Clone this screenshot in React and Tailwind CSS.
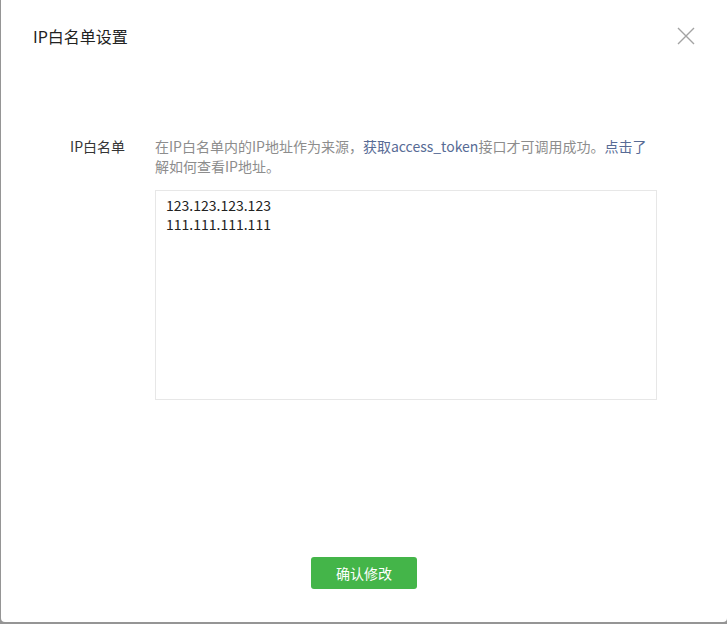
import React from 'react';

const font = { fontFamily: '"Noto Sans CJK SC", "Noto Sans", sans-serif' };

const CloseIcon = () => (
    <svg width="18" height="18" viewBox="0 0 18 18" className="block">
        <path d="M1 1 L17 17 M17 1 L1 17" stroke="#a3a3a3" strokeWidth="1.4" fill="none" />
    </svg>
);

const App = () => {
    return (
        <div className="w-[727px] h-[624px] bg-[#959595] pl-[1px] pb-[2px]" style={font}>
            <div className="h-full bg-white rounded-b-[4px] flex flex-col">
                {/* Header */}
                <div className="h-[72px] flex items-center justify-between pl-[32px] pr-[32px]">
                    <h2 className="text-[16px] text-[#222] leading-none">IP白名单设置</h2>
                    <button className="p-0"><CloseIcon /></button>
                </div>

                {/* Form */}
                <div className="flex mt-[64px]">
                    <label className="w-[124px] text-right text-[14px] leading-[20px] text-[#353535]">IP白名单</label>
                    <div className="ml-[30px] w-[502px]">
                        <p className="text-[14px] leading-[20px] text-[#8d8d8d]">
                            在IP白名单内的IP地址作为来源，<span className="text-[#576b95]">获取access_token</span>接口才可调用成功。<span className="text-[#576b95]">点击了</span>解如何查看IP地址。
                        </p>
                        <textarea
                            readOnly
                            defaultValue={'123.123.123.123\n111.111.111.111'}
                            className="mt-[14px] block w-[502px] h-[210px] border border-[#e7e7e7] px-[10px] pt-[5px] text-[14px] leading-[19px] text-[#222] resize-none outline-none"
                            style={font}
                        />
                    </div>
                </div>

                {/* Footer */}
                <div className="mt-auto pb-[33px] flex justify-center">
                    <button className="w-[106px] h-[32px] rounded-[3px] bg-[#44b549] text-white text-[14px]">确认修改</button>
                </div>
            </div>
        </div>
    );
};

export default App;
